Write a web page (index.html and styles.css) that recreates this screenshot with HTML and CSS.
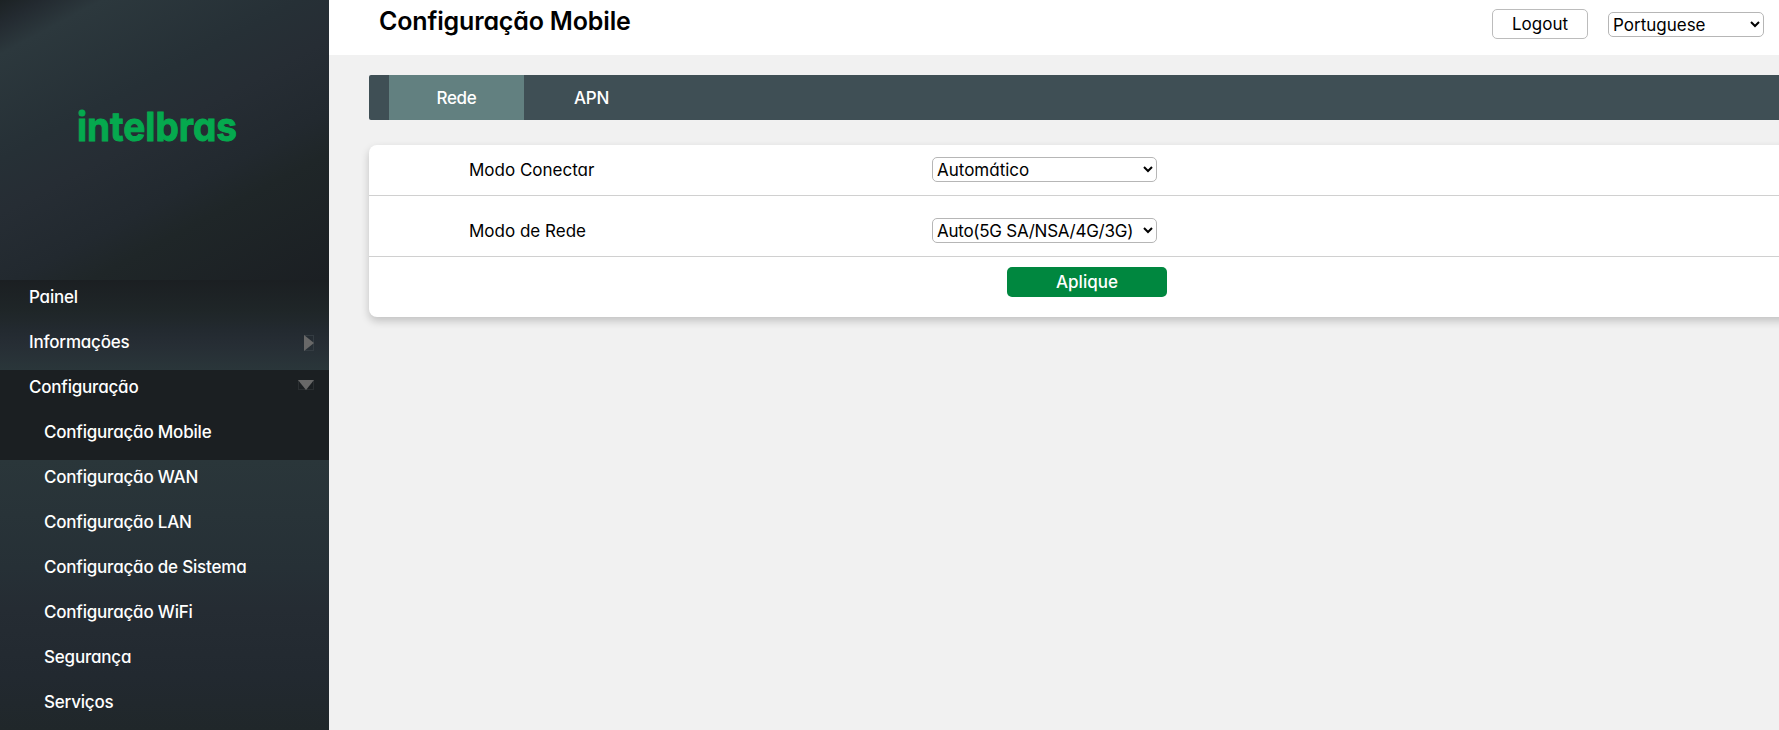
FILE: index.html
```html
<!DOCTYPE html>
<html lang="pt">
<head>
<meta charset="utf-8">
<title>Configuração Mobile</title>
<link rel="stylesheet" href="styles.css">
</head>
<body>
<aside class="sidebar">
  <div class="brand">
    <svg class="logo" width="162" height="40" viewBox="0 0 162 40" role="img" aria-label="intelbras">
      <text class="logo-text" x="0" y="32.5" textLength="160" lengthAdjust="spacingAndGlyphs">intelbras</text>
    </svg>
  </div>
  <nav class="menu">
    <div class="menu-top">
      <a class="item"><span>Painel</span></a>
      <a class="item"><span>Informações</span>
        <svg class="arrow" width="10" height="16" viewBox="0 0 10 16"><rect x=".5" y=".5" width="9" height="15" fill="none" stroke="#343c42"/><path d="M0 0L10 8L0 16Z" fill="#686868"/></svg>
      </a>
    </div>
    <div class="menu-current">
      <a class="item"><span>Configuração</span>
        <svg class="arrow" width="16" height="10" viewBox="0 0 16 10"><rect x=".5" y=".5" width="15" height="9" fill="none" stroke="#2a2e31"/><path d="M0 0H16L8 10Z" fill="#686868"/></svg>
      </a>
      <a class="item sub"><span>Configuração Mobile</span></a>
    </div>
    <div class="menu-rest">
      <a class="item sub"><span>Configuração WAN</span></a>
      <a class="item sub"><span>Configuração LAN</span></a>
      <a class="item sub"><span>Configuração de Sistema</span></a>
      <a class="item sub"><span>Configuração WiFi</span></a>
      <a class="item sub"><span>Segurança</span></a>
      <a class="item sub"><span>Serviços</span></a>
    </div>
  </nav>
</aside>
<main class="main">
  <header class="header">
    <h1 class="title">Configuração Mobile</h1>
    <div class="actions">
      <button class="logout">Logout</button>
      <select class="select language"><option>Portuguese</option></select>
    </div>
  </header>
  <div class="content">
    <div class="tabs">
      <a class="tab active">Rede</a>
      <a class="tab">APN</a>
    </div>
    <form class="card">
      <div class="row first">
        <label class="label">Modo Conectar</label>
        <select class="select"><option>Automático</option></select>
      </div>
      <div class="row second">
        <label class="label">Modo de Rede</label>
        <select class="select network"><option>Auto(5G SA/NSA/4G/3G)</option></select>
      </div>
      <div class="footer"><button class="apply" type="button">Aplique</button></div>
    </form>
  </div>
</main>
</body>
</html>
```
FILE: styles.css
```css
* { box-sizing: border-box; }
body {
  margin: 0;
  height: 730px;
  display: flex;
  overflow: hidden;
  background: #f1f1f1;
  color: #000;
  font-family: Inter, "Open Sans", sans-serif;
  font-size: 17px;
  font-weight: 380;
  font-feature-settings: "cv11" 1;
}
button, select {
  font: inherit;
  font-feature-settings: inherit;
  color: #000;
}
.sidebar {
  width: 329px;
  flex: none;
  height: 730px;
  display: flex;
  flex-direction: column;
}
.brand {
  height: 280px;
  flex: none;
  padding: 108px 0 0 77px;
  background: linear-gradient(152deg, #1c2224 0%, #232a30 5%, #2c383d 12%, #263036 35%, #262d34 47%, #22292f 63%, #1f2628 72%, #1b1f23 100%);
}
.logo { display: block; overflow: visible; }
.logo-text { font-size: 40px; font-weight: 700; fill: #05a94e; stroke: #05a94e; stroke-width: 1; }
.menu { flex: 1; display: flex; flex-direction: column; }
.menu-top { background: linear-gradient(#1b1f22 0%, #1f2628 35%, #232a30 56%, #262d34 70%, #2a363a 100%); }
.menu-current { background: #1b1f22; }
.menu-rest { flex: 1; background: linear-gradient(#2a363a 0%, #263036 40%, #252c33 55%, #222930 80%, #20272a 100%); }
.item {
  display: flex;
  justify-content: space-between;
  height: 45px;
  padding: 6px 15px 0 29px;
  color: #fff;
  font-weight: 500;
  line-height: 23px;
  letter-spacing: -0.2px;
}
.sub { padding-left: 44px; }
.arrow { align-self: flex-start; margin-top: 4px; }
.main { flex: 1; min-width: 0; }
.header {
  height: 55px;
  display: flex;
  justify-content: space-between;
  padding-left: 50px;
  background: #fff;
}
.title {
  margin: 6px 0 0;
  font-size: 25px;
  line-height: 30px;
  font-weight: 580;
  letter-spacing: -0.16px;
}
.actions { display: flex; gap: 20px; padding: 9px 15px 0 0; }
.logout {
  width: 96px;
  height: 30px;
  padding: 0;
  border: 1px solid #bcbcbc;
  border-radius: 5px;
  background: #fff;
}
.select {
  width: 225px;
  height: 25px;
  padding: 0;
  border: 1px solid #b6b6b6;
  border-radius: 5px;
  background: #fff;
}
.language { width: 156px; margin-top: 3px; }
.network { letter-spacing: -0.26px; }
.content { padding: 20px 0 0 40px; }
.tabs {
  height: 45px;
  display: flex;
  padding-left: 20px;
  border-radius: 2px 0 0 2px;
  background: #3f4f55;
}
.tab {
  width: 135px;
  color: #fff;
  font-weight: 500;
  line-height: 46px;
  text-align: center;
  letter-spacing: -0.3px;
}
.active { background: #628080; }
.card {
  margin: 25px -20px 0 0;
  height: 172px;
  border-radius: 8px;
  background: #fff;
  box-shadow: 0 4px 8px rgba(0, 0, 0, .2);
}
.row {
  display: flex;
  align-items: flex-start;
  padding-left: 100px;
  border-bottom: 1px solid #d0d0d0;
}
.first { height: 51px; padding-top: 12px; }
.second { height: 61px; padding-top: 22px; }
.label { width: 463px; line-height: 26px; }
.footer { padding: 10px 0 0 638px; }
.apply {
  display: block;
  width: 160px;
  height: 30px;
  padding: 0;
  border: 0;
  border-radius: 5px;
  background: #00873f;
  color: #fff;
  font-weight: 500;
}
```
